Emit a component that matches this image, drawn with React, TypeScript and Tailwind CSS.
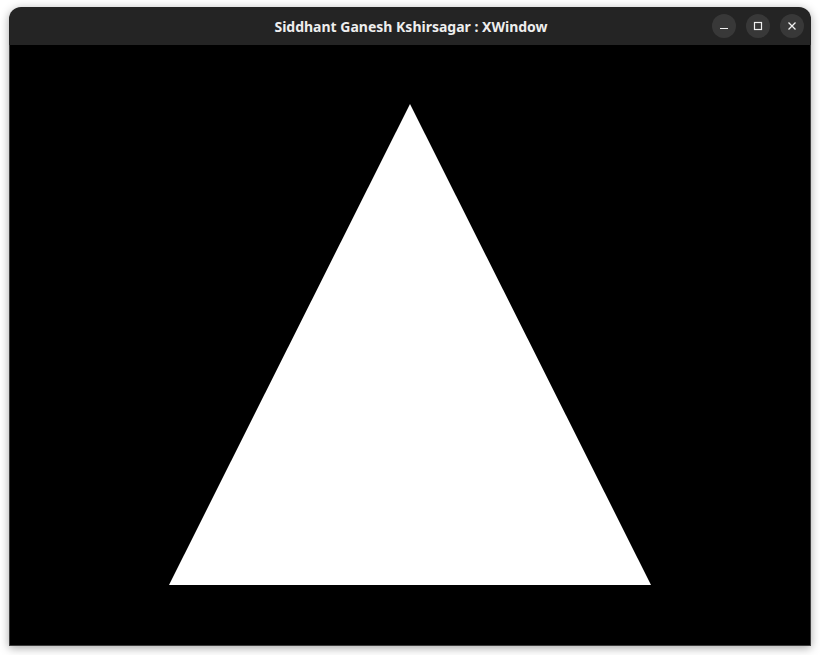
const App = () => {
  return (
    <div className="w-[820px] h-[655px] bg-white pt-[7px] pl-[9px]">
      <div
        className="w-[802px] h-[639px] flex flex-col rounded-t-[12px] bg-[#242424] shadow-[0_2px_10px_rgba(0,0,0,0.35)] overflow-hidden"
        style={{ fontFamily: '"Noto Sans", "DejaVu Sans", sans-serif' }}
      >
        <div className="h-[38px] flex items-center relative shrink-0">
          <div className="flex-1 text-center text-[14px] font-bold text-[#eeeeee] pl-[2px] pt-px">
            Siddhant Ganesh Kshirsagar : XWindow
          </div>
          <div className="absolute right-[7px] top-[7px] flex gap-[10px]">
            <button className="w-[24px] h-[24px] rounded-full bg-[#383838] flex items-center justify-center">
              <svg width="10" height="10" viewBox="0 0 10 10">
                <path d="M1 7.5h8" stroke="#f0f0f0" strokeWidth="1.2" />
              </svg>
            </button>
            <button className="w-[24px] h-[24px] rounded-full bg-[#383838] flex items-center justify-center">
              <svg width="10" height="10" viewBox="0 0 10 10">
                <rect x="1.5" y="1.5" width="7" height="7" fill="none" stroke="#f0f0f0" strokeWidth="1.2" />
              </svg>
            </button>
            <button className="w-[24px] h-[24px] rounded-full bg-[#383838] flex items-center justify-center">
              <svg width="10" height="10" viewBox="0 0 10 10">
                <path d="M1.5 1.5l7 7M8.5 1.5l-7 7" stroke="#f0f0f0" strokeWidth="1.3" />
              </svg>
            </button>
          </div>
        </div>
        <div className="flex-1 border border-t-0 border-[#3c3c3c] bg-black">
          <svg width="800" height="600" viewBox="0 0 800 600">
            <polygon points="400,59 159,540 641,540" fill="#ffffff" />
          </svg>
        </div>
      </div>
    </div>
  );
};

export default App;
